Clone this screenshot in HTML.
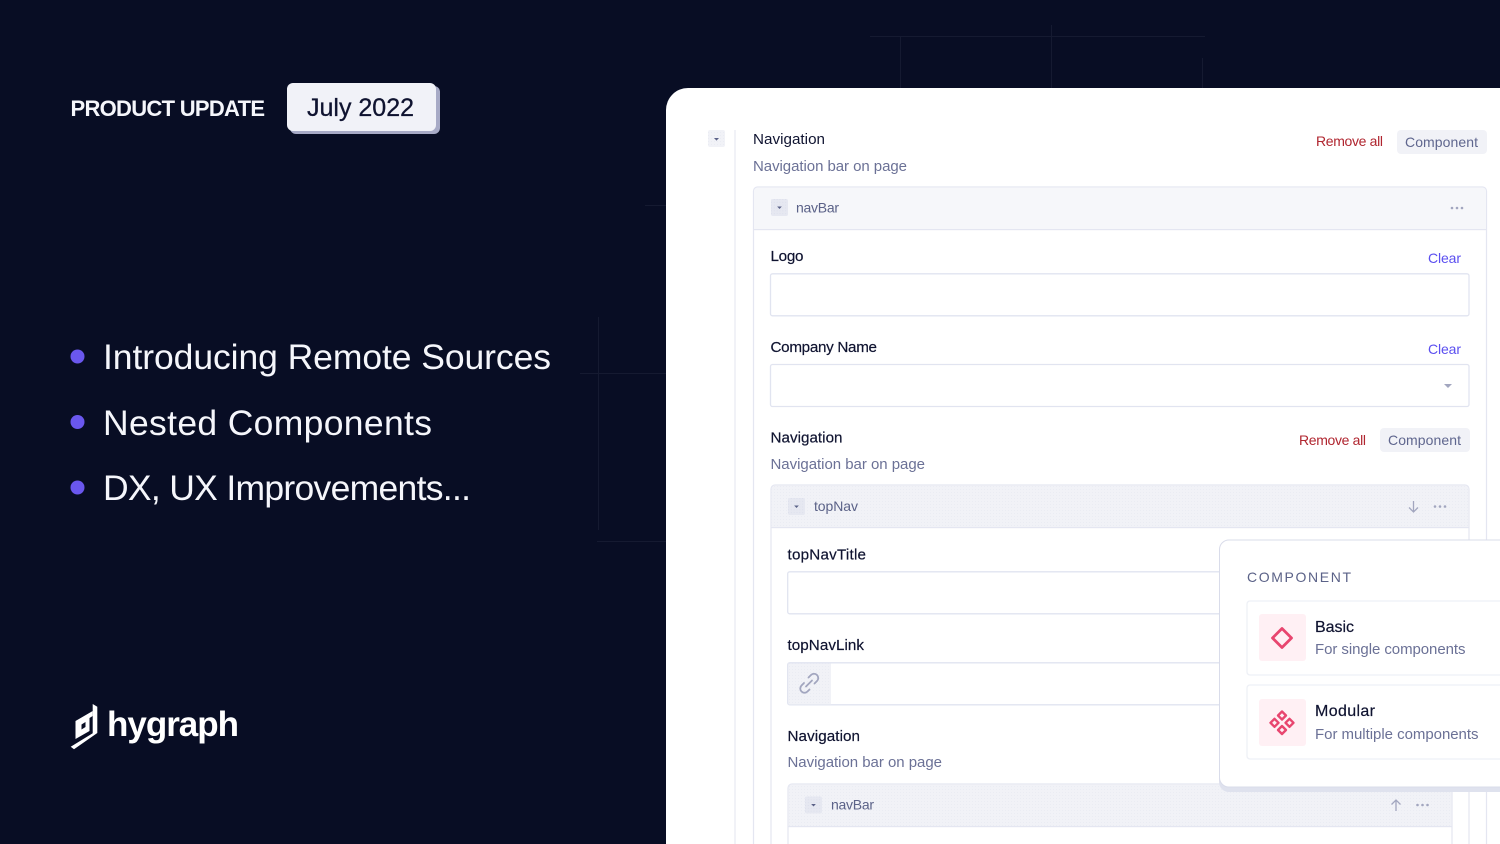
<!DOCTYPE html>
<html lang="en">
<head>
<meta charset="utf-8">
<title>Hygraph Product Update</title>
<style>
html,body{margin:0;padding:0;width:1500px;height:844px;overflow:hidden;background:#080d24}
svg{display:block}
text{font-family:"Liberation Sans",sans-serif;font-size:15px;white-space:pre}
.m{stroke-width:.2px;paint-order:stroke}
.d{fill:#0f1330;font-size:15.200px}.dm{fill:#0f1330;stroke:#0f1330;font-size:15.200px}
.s{fill:#6b7196}.h{fill:#5b6288;font-size:14px}.r{fill:#b0252f;font-size:14px}.p{fill:#5b4ff0;font-size:14px}.c{fill:#5f668e;font-size:14px}
.w{fill:#f5f6fb;font-size:35.500px}
.i{fill:#fff;stroke:#e1e4f0;stroke-width:1.300px}
</style>
</head>
<body>
<svg width="1500" height="844" viewBox="0 0 1500 844" xmlns="http://www.w3.org/2000/svg">
<defs>
<pattern id="dots" width="3" height="3" patternUnits="userSpaceOnUse"><rect width="3" height="3" fill="#f1f2f7"/><rect width="1" height="1" fill="#eaecf3"/></pattern>
<pattern id="dots2" width="3" height="3" patternUnits="userSpaceOnUse"><rect width="3" height="3" fill="#e6e8f1"/><rect width="1" height="1" fill="#dcdfec"/></pattern>
<symbol id="tg" viewBox="0 0 18 18" overflow="visible"><rect width="18" height="18" rx="2" fill="url(#dots2)"/><path d="M6.500 8h5L9 10.600z" fill="#5b6288"/></symbol>
</defs>
<rect width="1500" height="844" fill="#080d24"/>
<!-- faint grid -->
<g stroke="#151a31" stroke-width="1" fill="none">
<path d="M870 36.500H1205M900.500 36V88M1051.500 25V88M1202.500 58V88"/>
<path d="M598.500 317V530M580 373.500H666M597 541.500H666M645 205.500H666"/>
</g>
<!-- left header -->
<text x="70.500" y="116" textLength="194.500" lengthAdjust="spacing" style="font-size:22px;font-weight:700;fill:#f5f6fb">PRODUCT UPDATE</text>
<rect x="290" y="86" width="150" height="48" rx="6" fill="#a7aac6"/>
<rect x="287" y="83" width="149" height="48" rx="6" fill="#f1f2f8"/>
<text x="307" y="116" textLength="107" lengthAdjust="spacing" style="font-size:25px;fill:#0f1330;stroke:#0f1330;stroke-width:.3px">July 2022</text>
<!-- bullets -->
<circle cx="77.500" cy="356.500" r="7" fill="#6a57ee"/>
<circle cx="77.500" cy="422" r="7" fill="#6a57ee"/>
<circle cx="77.500" cy="487.500" r="7" fill="#6a57ee"/>
<text class="w" x="103" y="369" textLength="448" lengthAdjust="spacing">Introducing Remote Sources</text>
<text class="w" x="103" y="435" textLength="329" lengthAdjust="spacing">Nested Components</text>
<text class="w" x="103" y="500" textLength="368" lengthAdjust="spacing">DX, UX Improvements...</text>
<!-- logo -->
<g fill="#fff">
<polygon points="92.700,704 97.300,706.700 97.300,733 74,749.300 70.700,746.700 92.700,733.300"/>
<path fill-rule="evenodd" d="M92.700 711L75.500 721V739L89.500 731V718L92.700 716ZM81.500 724.500L85.500 722V727L81.500 729.500Z"/>
</g>
<text x="107" y="736" textLength="132" lengthAdjust="spacing" style="font-size:35px;font-weight:700;fill:#fff">hygraph</text>
<!-- main card -->
<path d="M688 88H1500V844H666V110A22 22 0 0 1 688 88Z" fill="#fff"/>
<rect x="734" y="130" width="2" height="714" fill="#f1f2f7"/>
<rect x="708" y="130" width="17" height="17" rx="2" fill="url(#dots)"/>
<path d="M714 138h5l-2.500 2.600z" fill="#5b6288"/>
<text class="d" x="753" y="144" textLength="72" lengthAdjust="spacing">Navigation</text>
<text class="s" x="753" y="171" textLength="154" lengthAdjust="spacing">Navigation bar on page</text>
<text class="r" x="1316" y="146" textLength="67" lengthAdjust="spacing">Remove all</text>
<rect x="1397" y="130" width="90" height="24" rx="4" fill="#f1f2f7"/>
<text class="c" x="1405" y="147" textLength="73" lengthAdjust="spacing">Component</text>
<!-- navBar outer -->
<path d="M753.500 844V191A4 4 0 0 1 757.500 187H1482.500A4 4 0 0 1 1486.500 191V844" fill="#fff" stroke="#e4e6f1" stroke-width="1.200"/>
<path d="M754.100 229V191.500A3.500 3.500 0 0 1 757.500 187.600H1482.500A3.500 3.500 0 0 1 1485.900 191.500V229Z" fill="#f6f7fa"/>
<rect x="754" y="229" width="732" height="1.200" fill="#e4e6f1"/>
<use href="#tg" x="771" y="199" width="17" height="17"/>
<text class="h" x="796" y="212.500" textLength="43" lengthAdjust="spacing">navBar</text>
<g fill="#a2a6bf"><circle cx="1452" cy="208" r="1.300"/><circle cx="1457" cy="208" r="1.300"/><circle cx="1462" cy="208" r="1.300"/></g>
<text class="dm m" x="770.500" y="261" textLength="33" lengthAdjust="spacing">Logo</text>
<text class="p" x="1428" y="263" textLength="33" lengthAdjust="spacing">Clear</text>
<rect class="i" x="770.500" y="273.800" width="698.500" height="42" rx="2"/>
<text class="dm m" x="770.500" y="352" textLength="106.500" lengthAdjust="spacing">Company Name</text>
<text class="p" x="1428" y="354" textLength="33" lengthAdjust="spacing">Clear</text>
<rect class="i" x="770.500" y="364.500" width="698.500" height="42" rx="2"/>
<path d="M1444 384h8l-4 4z" fill="#a2a6bf"/>
<text class="dm m" x="770.500" y="442.500" textLength="72" lengthAdjust="spacing">Navigation</text>
<text class="s" x="770.500" y="469" textLength="154.500" lengthAdjust="spacing">Navigation bar on page</text>
<text class="r" x="1299" y="445" textLength="67" lengthAdjust="spacing">Remove all</text>
<rect x="1380" y="428" width="90" height="24" rx="4" fill="#f1f2f7"/>
<text class="c" x="1388" y="445" textLength="73" lengthAdjust="spacing">Component</text>
<!-- topNav -->
<path d="M771 844V489A4 4 0 0 1 775 485H1465A4 4 0 0 1 1469 489V844" fill="#fff" stroke="#e4e6f1" stroke-width="1.200"/>
<path d="M771.600 527V489.500A3.500 3.500 0 0 1 775 485.600H1465A3.500 3.500 0 0 1 1468.400 489.500V527Z" fill="url(#dots)"/>
<rect x="771.500" y="527" width="697" height="1.200" fill="#e4e6f1"/>
<use href="#tg" x="788" y="498" width="17" height="17"/>
<text class="h" x="814" y="511" textLength="44" lengthAdjust="spacing">topNav</text>
<path d="M1413.500 501V511.500M1409 507.500L1413.500 512L1418 507.500" fill="none" stroke="#a2a6bf" stroke-width="1.300"/>
<g fill="#a2a6bf"><circle cx="1435" cy="506.500" r="1.300"/><circle cx="1440" cy="506.500" r="1.300"/><circle cx="1445" cy="506.500" r="1.300"/></g>
<text class="dm m" x="787.500" y="559.500" textLength="78.500" lengthAdjust="spacing">topNavTitle</text>
<rect class="i" x="787.700" y="571.800" width="664" height="42" rx="2"/>
<text class="dm m" x="787.500" y="650" textLength="76.500" lengthAdjust="spacing">topNavLink</text>
<rect class="i" x="787.700" y="662.800" width="664" height="42" rx="2"/>
<rect x="788.500" y="663.500" width="42.500" height="40.800" fill="url(#dots)"/>
<g fill="none" stroke="#a2a6bf" stroke-width="1.800" stroke-linecap="round">
<path d="M808.500 677.500l2.500-2.500a4.200 4.200 0 0 1 6 6l-2.500 2.500"/>
<path d="M809.500 689.500l-2 2a4.200 4.200 0 0 1-6-6l2.500-2.500"/>
<path d="M806 686.500l6-6"/>
</g>
<text class="dm m" x="787.500" y="741" textLength="72.500" lengthAdjust="spacing">Navigation</text>
<text class="s" x="787.500" y="767" textLength="154.500" lengthAdjust="spacing">Navigation bar on page</text>
<!-- nested navBar -->
<path d="M788 844V788A4 4 0 0 1 792 784H1448A4 4 0 0 1 1452 788V844" fill="#fff" stroke="#e4e6f1" stroke-width="1.200"/>
<path d="M788.600 826V788.500A3.500 3.500 0 0 1 792 784.600H1448A3.500 3.500 0 0 1 1451.400 788.500V826Z" fill="url(#dots)"/>
<rect x="788.500" y="826" width="663" height="1.200" fill="#e4e6f1"/>
<use href="#tg" x="805" y="796" width="17" height="18"/>
<text class="h" x="831" y="809.500" textLength="43" lengthAdjust="spacing">navBar</text>
<path d="M1396 811V800M1391.500 804.500L1396 800L1400.500 804.500" fill="none" stroke="#a2a6bf" stroke-width="1.300"/>
<g fill="#a2a6bf"><circle cx="1417.500" cy="805" r="1.300"/><circle cx="1422.500" cy="805" r="1.300"/><circle cx="1427.500" cy="805" r="1.300"/></g>
<!-- popup -->
<path d="M1229 545H1500V792H1229A10 10 0 0 1 1219 782V555A10 10 0 0 1 1229 545Z" fill="#dfe2ee"/>
<path d="M1510 540H1229A9.500 9.500 0 0 0 1219.500 549.500V777.500A9.500 9.500 0 0 0 1229 787H1510Z" fill="#fff" stroke="#d9dcea" stroke-width="1"/>
<text x="1247" y="582" textLength="104" lengthAdjust="spacing" style="font-size:14px;fill:#5b6288">COMPONENT</text>
<path d="M1510 601H1250A3 3 0 0 0 1247 604V672A3 3 0 0 0 1250 675H1510Z" fill="#fff" stroke="#eef0f6" stroke-width="1.300"/>
<rect x="1259" y="614" width="47" height="47" rx="3" fill="#fff0f4"/>
<path d="M1282 628.500L1291.500 638L1282 647.500L1272.500 638Z" fill="none" stroke="#e8466f" stroke-width="2.800" stroke-linejoin="round"/>
<text class="dm m" x="1315" y="632" textLength="39" lengthAdjust="spacing" style="font-size:16px">Basic</text>
<text class="s" x="1315" y="654" textLength="150.500" lengthAdjust="spacing">For single components</text>
<path d="M1510 685H1250A3 3 0 0 0 1247 688V756A3 3 0 0 0 1250 759H1510Z" fill="#fff" stroke="#eef0f6" stroke-width="1.300"/>
<rect x="1259" y="699" width="47" height="47" rx="3" fill="#fff0f4"/>
<g fill="none" stroke="#e8466f" stroke-width="2.400" stroke-linejoin="round">
<path d="M1282 711.500L1286 715.500L1282 719.500L1278 715.500Z"/>
<path d="M1282 726L1286 730L1282 734L1278 730Z"/>
<path d="M1274.500 718.800L1278.500 722.800L1274.500 726.800L1270.500 722.800Z"/>
<path d="M1289.500 718.800L1293.500 722.800L1289.500 726.800L1285.500 722.800Z"/>
</g>
<text class="dm m" x="1315" y="716" textLength="60" lengthAdjust="spacing" style="font-size:16px">Modular</text>
<text class="s" x="1315" y="739" textLength="163.500" lengthAdjust="spacing">For multiple components</text>
</svg>
</body>
</html>
